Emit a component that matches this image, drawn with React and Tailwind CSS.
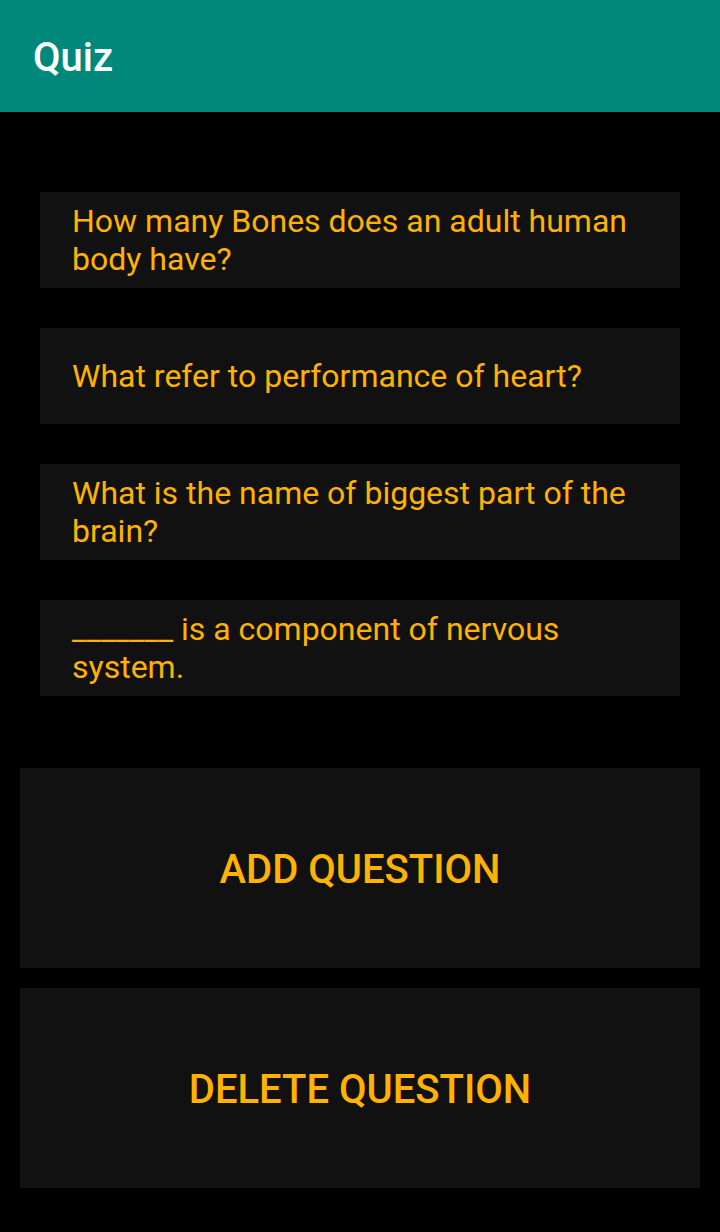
import React from "react";

const questions = [
  "How many Bones does an adult human body have?",
  "What refer to performance of heart?",
  "What is the name of biggest part of the brain?",
  "_______ is a component of nervous system.",
];

export default function App() {
  return (
    <div className="min-h-[1232px] w-[720px] bg-black font-['Roboto',sans-serif]">
      {/* app bar */}
      <header className="flex h-[112px] items-center bg-[#00897b] px-[33px] pt-[4px]">
        <h1 className="text-[40px] font-medium leading-none text-white">Quiz</h1>
      </header>

      {/* question list */}
      <ul className="flex flex-col gap-[40px] px-[40px] pt-[80px]">
        {questions.map((q) => (
          <li
            key={q}
            className="flex h-[96px] items-center bg-[#111111] pl-[32px] pr-[40px] text-[32px] leading-[38px] text-[#ffb300]"
          >
            {q}
          </li>
        ))}
      </ul>

      {/* actions */}
      <div className="flex flex-col gap-[20px] px-[20px] pt-[72px]">
        <ActionButton>ADD QUESTION</ActionButton>
        <ActionButton>DELETE QUESTION</ActionButton>
      </div>
    </div>
  );
}

function ActionButton({ children }) {
  return (
    <button className="flex h-[200px] w-full items-center justify-center bg-[#111111] pt-[4px] text-[40px] font-medium text-[#ffb300]">
      {children}
    </button>
  );
}
